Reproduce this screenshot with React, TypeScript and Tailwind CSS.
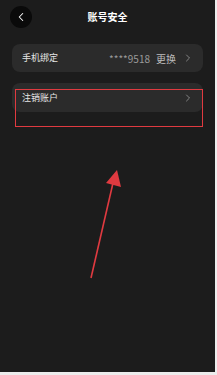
import { ChevronLeft, ChevronRight } from "lucide-react";

const font = { fontFamily: '"Noto Sans CJK SC", "Noto Sans", sans-serif' };

export default function App() {
  return (
    <div className="h-[375px] w-[217px] bg-[#ececec]" style={font}>
      <div className="relative flex h-[372px] w-[215px] flex-col bg-[#1c1c1c]">
        <div className="flex h-[33px] items-center px-[10px]">
          <div className="flex h-[22px] w-[22px] items-center justify-center rounded-full bg-[#0a0a0a]">
            <ChevronLeft size={14} strokeWidth={1.8} className="text-white" />
          </div>
          <p className="flex-1 pr-[22px] text-center text-[10px] font-bold leading-none text-white">账号安全</p>
        </div>

        <div className="mt-[11px] flex flex-col gap-[11px] px-[12px]">
          <div className="flex h-[28px] items-center rounded-[8px] bg-[#2b2b2b] pl-[10px] pr-[9px]">
            <span className="flex-1 text-[9px] text-[#e6e6e6]">手机绑定</span>
            <span className="text-[10px] text-[#9a9a9a]">****9518</span>
            <span className="ml-[6px] text-[10px] text-[#bdbdbd]">更换</span>
            <ChevronRight size={12} strokeWidth={1.6} className="ml-[6px] text-[#9a9a9a]" />
          </div>
          <div className="flex h-[29px] items-center rounded-[8px] bg-[#2b2b2b] pl-[10px] pr-[9px]">
            <span className="flex-1 text-[9px] text-[#e6e6e6]">注销账户</span>
            <ChevronRight size={12} strokeWidth={1.6} className="text-[#9a9a9a]" />
          </div>
        </div>

        <div className="absolute left-[15px] top-[89px] h-[38px] w-[188px] border-[1.5px] border-[#e03a40]" />

        <svg className="absolute left-0 top-0" width="215" height="372" viewBox="0 0 215 372">
          <line x1="91" y1="278" x2="113" y2="183" stroke="#e03a40" strokeWidth="1.6" />
          <polygon points="117,170 106,183 121,187" fill="#e03a40" />
        </svg>
      </div>
    </div>
  );
}
